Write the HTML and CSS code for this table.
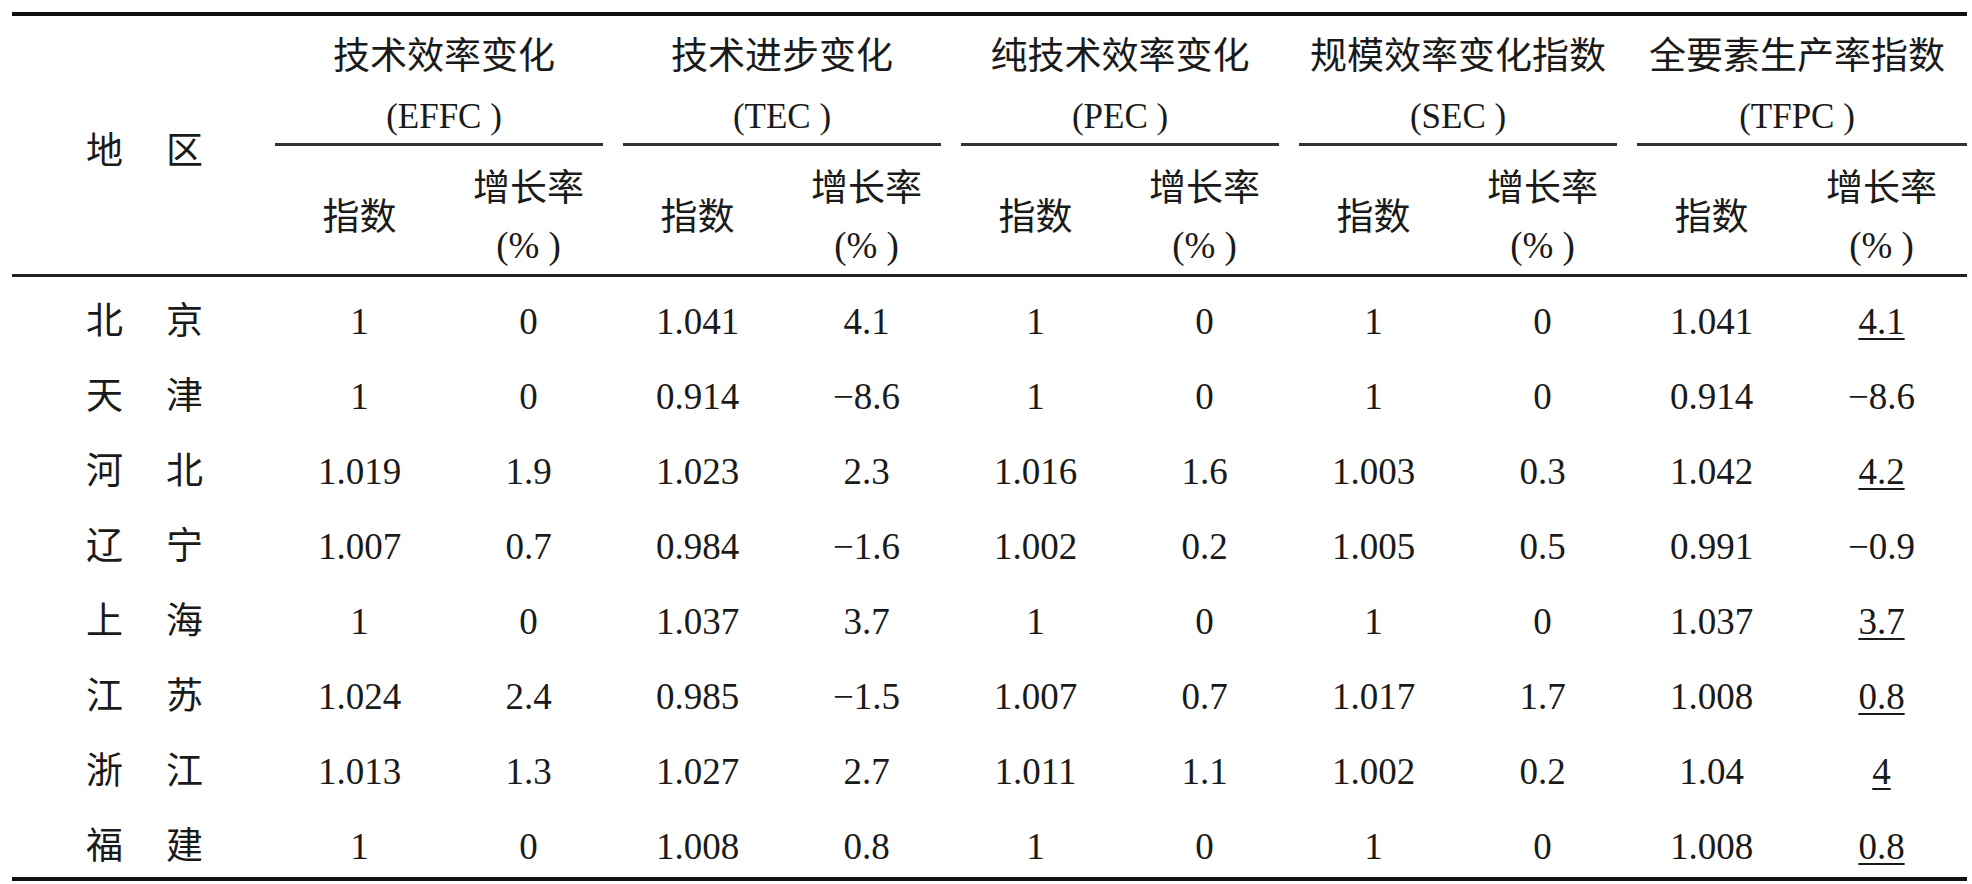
FILE: index.html
```html
<!DOCTYPE html>
<html lang="zh-CN">
<head>
<meta charset="utf-8">
<title>全要素生产率指数</title>
<link rel="stylesheet" href="styles.css">
</head>
<body>
<table class="tfp">
  <colgroup>
    <col class="c-region">
    <col class="c-data"><col class="c-data"><col class="c-data"><col class="c-data"><col class="c-data">
    <col class="c-data"><col class="c-data"><col class="c-data"><col class="c-data"><col class="c-last">
  </colgroup>
  <thead>
    <tr class="h1">
      <th class="region-h" rowspan="2">地区</th>
      <th class="grp first" colspan="2"><div class="gt">技术效率变化</div><div class="gp">(EFFC )</div><div class="gr"></div></th>
      <th class="grp" colspan="2"><div class="gt">技术进步变化</div><div class="gp">(TEC )</div><div class="gr"></div></th>
      <th class="grp" colspan="2"><div class="gt">纯技术效率变化</div><div class="gp">(PEC )</div><div class="gr"></div></th>
      <th class="grp" colspan="2"><div class="gt">规模效率变化指数</div><div class="gp">(SEC )</div><div class="gr"></div></th>
      <th class="grp last" colspan="2"><div class="gt">全要素生产率指数</div><div class="gp">(TFPC )</div><div class="gr"></div></th>
    </tr>
    <tr class="h2">
      <th class="idx">指数</th><th class="rate">增长率<br>(%&nbsp;)</th>
      <th class="idx">指数</th><th class="rate">增长率<br>(%&nbsp;)</th>
      <th class="idx">指数</th><th class="rate">增长率<br>(%&nbsp;)</th>
      <th class="idx">指数</th><th class="rate">增长率<br>(%&nbsp;)</th>
      <th class="idx">指数</th><th class="rate">增长率<br>(%&nbsp;)</th>
    </tr>
  </thead>
  <tbody>
    <tr><td class="region">北京</td><td>1</td><td>0</td><td>1.041</td><td>4.1</td><td>1</td><td>0</td><td>1</td><td>0</td><td>1.041</td><td><u>4.1</u></td></tr>
    <tr><td class="region">天津</td><td>1</td><td>0</td><td>0.914</td><td>−8.6</td><td>1</td><td>0</td><td>1</td><td>0</td><td>0.914</td><td>−8.6</td></tr>
    <tr><td class="region">河北</td><td>1.019</td><td>1.9</td><td>1.023</td><td>2.3</td><td>1.016</td><td>1.6</td><td>1.003</td><td>0.3</td><td>1.042</td><td><u>4.2</u></td></tr>
    <tr><td class="region">辽宁</td><td>1.007</td><td>0.7</td><td>0.984</td><td>−1.6</td><td>1.002</td><td>0.2</td><td>1.005</td><td>0.5</td><td>0.991</td><td>−0.9</td></tr>
    <tr><td class="region">上海</td><td>1</td><td>0</td><td>1.037</td><td>3.7</td><td>1</td><td>0</td><td>1</td><td>0</td><td>1.037</td><td><u>3.7</u></td></tr>
    <tr><td class="region">江苏</td><td>1.024</td><td>2.4</td><td>0.985</td><td>−1.5</td><td>1.007</td><td>0.7</td><td>1.017</td><td>1.7</td><td>1.008</td><td><u>0.8</u></td></tr>
    <tr><td class="region">浙江</td><td>1.013</td><td>1.3</td><td>1.027</td><td>2.7</td><td>1.011</td><td>1.1</td><td>1.002</td><td>0.2</td><td>1.04</td><td><u>4</u></td></tr>
    <tr><td class="region">福建</td><td>1</td><td>0</td><td>1.008</td><td>0.8</td><td>1</td><td>0</td><td>1</td><td>0</td><td>1.008</td><td><u>0.8</u></td></tr>
  </tbody>
</table>
</body>
</html>
```

FILE: styles.css
```css
html, body {
  margin: 0;
  background: #ffffff;
}

body {
  padding: 12px 0 0 12px;
  font-family: "Liberation Serif", "Noto Sans CJK SC", serif;
  color: #1a1a1a;
}

.tfp {
  border-collapse: separate;
  border-spacing: 0;
  table-layout: fixed;
  width: 1955px;
  font-size: 37px;
}

.c-region { width: 263px; }
.c-data { width: 169px; }
.c-last { width: 171px; }

.tfp th,
.tfp td {
  padding: 0;
  font-weight: normal;
  text-align: center;
  vertical-align: top;
}

/* top rule */
.tfp .h1 th {
  border-top: 4px solid #111;
}

.tfp .region-h {
  text-align: left;
  padding-left: 74px;
  padding-top: 116px;
  line-height: 40px;
  letter-spacing: 43px;
  border-bottom: 3px solid #222;
}

.grp .gt {
  padding-top: 21px;
  line-height: 40px;
  white-space: nowrap;
}

.grp .gp {
  margin-top: 20px;
  line-height: 40px;
  font-size: 35px;
  white-space: nowrap;
}

.grp .gr {
  margin: 6px 10px 0;
  border-top: 3px solid #333;
}

.grp.first .gr { margin-left: 0; }
.grp.last .gr { margin-right: 0; }

/* sub header */
.tfp .h2 th {
  line-height: 57px;
  padding-top: 14px;
  border-bottom: 3px solid #222;
}

.tfp .h2 th.idx {
  padding-top: 43px;
}

/* body */
.tfp td {
  line-height: 40px;
  padding-top: 25px;
  padding-bottom: 10px;
}

.tfp td.region {
  text-align: left;
  padding-left: 74px;
  letter-spacing: 43px;
}

.tfp tbody tr:last-child td {
  border-bottom: 4px solid #111;
}

.tfp u {
  text-decoration: underline;
  text-decoration-thickness: 2px;
  text-underline-offset: 4px;
}
```
